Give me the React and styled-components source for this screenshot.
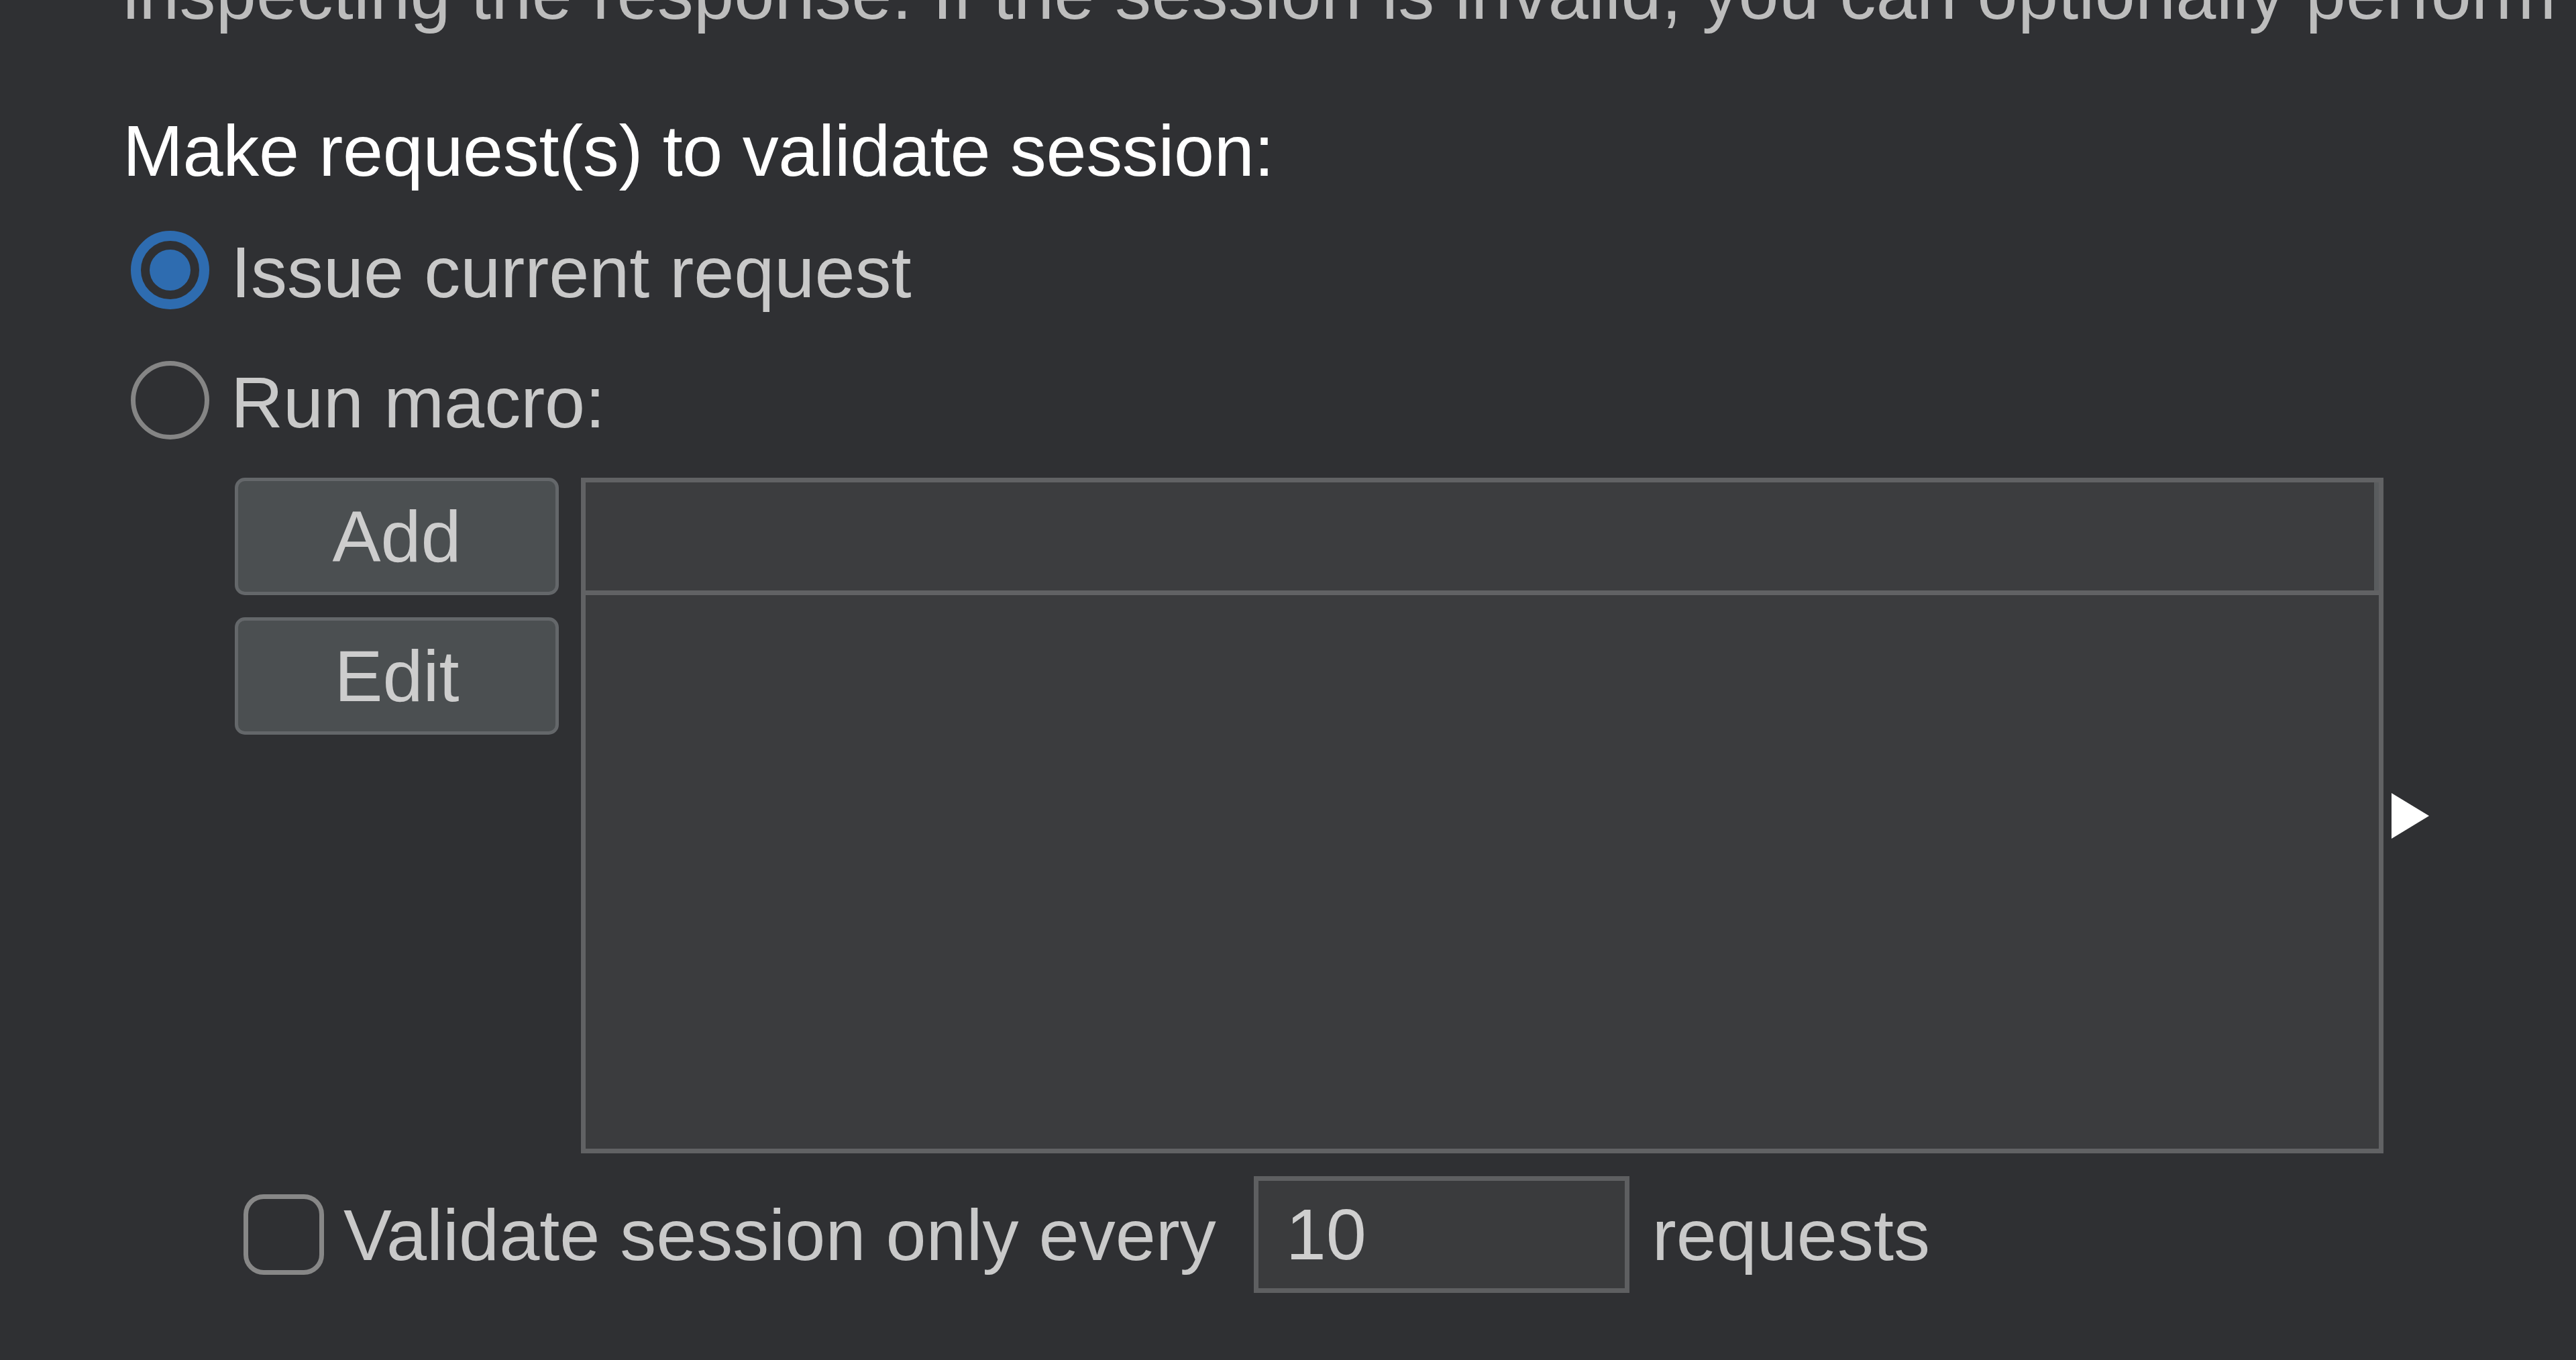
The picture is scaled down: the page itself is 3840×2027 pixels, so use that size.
import React from 'react';
import styled, { createGlobalStyle } from 'styled-components';

const GlobalStyle = createGlobalStyle`
  html, body {
    margin: 0;
    padding: 0;
    background-color: #2f3033;
    overflow: hidden;
  }
`;

const Page = styled.div`
  display: flex;
  flex-flow: column nowrap;
  align-items: flex-start;
  box-sizing: border-box;
  width: 3840px;
  height: 2027px;
  overflow: hidden;
  padding-left: 183px;
  background-color: #2f3033;
  font-family: "Liberation Sans", Arial, sans-serif;
  font-size: 108px;
  line-height: 123px;
  color: #c9c9c9;
`;

const Intro = styled.div`
  margin-top: -71px;
  white-space: nowrap;
  color: #bdbdbd;
  letter-spacing: 0.25px;
`;

const Heading = styled.div`
  margin-top: 111px;
  white-space: nowrap;
  color: #ffffff;
  letter-spacing: -0.35px;
`;

const RadioGroup = styled.div`
  display: flex;
  flex-flow: column nowrap;
  gap: 71px;
  margin-top: 58px;
`;

const Option = styled.label`
  display: flex;
  align-items: center;
  height: 123px;
  white-space: nowrap;
`;

const RadioCircle = styled.span`
  position: relative;
  box-sizing: border-box;
  width: 117px;
  height: 117px;
  margin: -6px 32px 0 12px;
  border-radius: 50%;
  border: ${props => (props.checked ? '15px solid #2e6cb0' : '7px solid #858585')};

  &::after {
    content: '';
    display: ${props => (props.checked ? 'block' : 'none')};
    position: absolute;
    top: 13px;
    left: 13px;
    width: 61px;
    height: 61px;
    border-radius: 50%;
    background-color: #2e6cb0;
  }
`;

const MacroArea = styled.div`
  display: flex;
  align-items: center;
  margin-top: 51px;
  margin-left: 167px;
`;

const ButtonColumn = styled.div`
  display: flex;
  flex-flow: column nowrap;
  gap: 33px;
  align-self: flex-start;
`;

const Button = styled.button`
  box-sizing: border-box;
  width: 483px;
  height: 175px;
  padding: 0;
  border: 5px solid #64676a;
  border-radius: 15px;
  background-color: #4b4f51;
  color: #cdcdcd;
  font-family: inherit;
  font-size: 108px;
  line-height: 1;
`;

const MacroTable = styled.div`
  display: flex;
  flex-flow: column nowrap;
  box-sizing: border-box;
  width: 2687px;
  height: 1007px;
  margin-left: 33px;
  border: 7px solid #616264;
  background-color: #3b3c3e;
`;

const TableHeader = styled.div`
  display: flex;
  height: 161px;
  border-bottom: 7px solid #616264;
`;

const HeaderCell = styled.div`
  flex: 1;
  background-color: #3c3d3f;
`;

const HeaderCorner = styled.div`
  width: 7px;
  background-color: #595c5e;
`;

const Arrow = styled.svg`
  display: block;
  margin-left: 12px;
`;

const ValidateRow = styled.div`
  display: flex;
  align-items: center;
  margin-top: 34px;
  margin-left: 180px;
  white-space: nowrap;
`;

const Checkbox = styled.span`
  box-sizing: border-box;
  width: 120px;
  height: 120px;
  margin-right: 29px;
  border: 7px solid #878787;
  border-radius: 30px;
`;

const CountInput = styled.div`
  box-sizing: border-box;
  width: 560px;
  height: 174px;
  margin: 0 34px 0 56px;
  padding-left: 41px;
  border: 7px solid #5e5f61;
  background-color: #3a3b3d;
  line-height: 160px;
  color: #cfcfcf;
`;

const Radio = ({ checked, children }) => (
  <Option>
    <RadioCircle checked={checked} />
    {children}
  </Option>
);

export default function App() {
  return (
    <Page>
      <GlobalStyle />
      <Intro>inspecting the response. If the session is invalid, you can optionally perform</Intro>
      <Heading>Make request(s) to validate session:</Heading>
      <RadioGroup>
        <Radio checked>Issue current request</Radio>
        <Radio>Run macro:</Radio>
      </RadioGroup>
      <MacroArea>
        <ButtonColumn>
          <Button>Add</Button>
          <Button>Edit</Button>
        </ButtonColumn>
        <MacroTable>
          <TableHeader>
            <HeaderCell />
            <HeaderCorner />
          </TableHeader>
        </MacroTable>
        <Arrow width="56" height="68" viewBox="0 0 56 68">
          <polygon points="0,0 56,34 0,68" fill="#ffffff" />
        </Arrow>
      </MacroArea>
      <ValidateRow>
        <Checkbox />
        Validate session only every
        <CountInput>10</CountInput>
        requests
      </ValidateRow>
    </Page>
  );
}
